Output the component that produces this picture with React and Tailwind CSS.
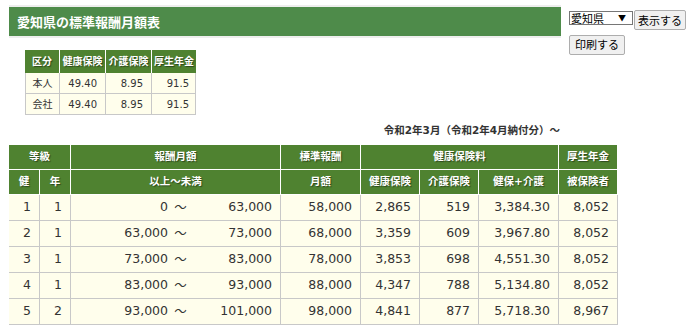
import React from "react";

const rows = [
  ["1", "1", "0", "63,000", "58,000", "2,865", "519", "3,384.30", "8,052"],
  ["2", "1", "63,000", "73,000", "68,000", "3,359", "609", "3,967.80", "8,052"],
  ["3", "1", "73,000", "83,000", "78,000", "3,853", "698", "4,551.30", "8,052"],
  ["4", "1", "83,000", "93,000", "88,000", "4,347", "788", "5,134.80", "8,052"],
  ["5", "2", "93,000", "101,000", "98,000", "4,841", "877", "5,718.30", "8,967"],
];

const th =
  "bg-[#4f8230] text-white font-bold text-[10.5px] text-center border-r border-b border-white p-0 [text-shadow:1px_1px_1px_rgba(0,0,0,0.45)]";
const tdBase =
  "bg-[#fffeec] text-[#333] text-[12.5px] border-r border-b border-[#c8c8c8] py-0 pl-0";
const td = tdBase + " text-right pr-[8px]";
const sth =
  "bg-[#4f8230] text-white font-bold text-[10px] text-center border-r border-white p-0 [text-shadow:1px_1px_1px_rgba(0,0,0,0.45)]";
const std =
  "bg-[#fffeec] text-[#333] text-[10px] border-r border-b border-[#c8c8c8] py-0 pl-0";

export default function App() {
  return (
    <div className="flex items-start font-['DejaVu_Sans','Noto_Sans_CJK_JP',sans-serif] bg-white min-h-[325px]">
      <div className="ml-[9px] w-[552px] flex-none">
        <div className="mt-[5px] border-t-2 border-b-2 border-[#eeeeee]">
          <div className="h-[29px] bg-[#4e8b4a] flex items-center pl-[8px]">
            <h1 className="text-white font-bold text-[13px] leading-none font-['Noto_Sans_CJK_JP',sans-serif]">
              愛知県の標準報酬月額表
            </h1>
          </div>
        </div>

        <table className="mt-[12px] ml-[16px] border-separate border-spacing-0 table-fixed w-[171px]">
          <colgroup>
            <col className="w-[35px]" />
            <col className="w-[46px]" />
            <col className="w-[46px]" />
            <col className="w-[44px]" />
          </colgroup>
          <thead>
            <tr className="h-[23px]">
              <th className={sth}>区分</th>
              <th className={sth}>健康保険</th>
              <th className={sth}>介護保険</th>
              <th className={sth + " border-r-0"}>厚生年金</th>
            </tr>
          </thead>
          <tbody>
            {[
              ["本人", "49.40", "8.95", "91.5"],
              ["会社", "49.40", "8.95", "91.5"],
            ].map((r) => (
              <tr key={r[0]} className="h-[21px]">
                <td className={std + " border-l text-center pr-0"}>{r[0]}</td>
                <td className={std + " text-right pr-[8px]"}>{r[1]}</td>
                <td className={std + " text-right pr-[8px]"}>{r[2]}</td>
                <td className={std + " text-right pr-[6px]"}>{r[3]}</td>
              </tr>
            ))}
          </tbody>
        </table>

        <p className="mt-[8px] text-right text-[10.5px] leading-[14px] font-bold text-[#333] pr-[1px]">
          令和2年3月（令和2年4月納付分）～
        </p>

        <table className="mt-[8px] border-separate border-spacing-0 table-fixed w-[609px]">
          <colgroup>
            <col className="w-[31px]" />
            <col className="w-[31px]" />
            <col className="w-[210px]" />
            <col className="w-[80px]" />
            <col className="w-[59px]" />
            <col className="w-[59px]" />
            <col className="w-[80px]" />
            <col className="w-[59px]" />
          </colgroup>
          <thead>
            <tr className="h-[25px]">
              <th colSpan={2} className={th}>等級</th>
              <th className={th}>報酬月額</th>
              <th className={th}>標準報酬</th>
              <th colSpan={3} className={th}>健康保険料</th>
              <th className={th}>厚生年金</th>
            </tr>
            <tr className="h-[25px]">
              <th className={th}>健</th>
              <th className={th}>年</th>
              <th className={th}>以上～未満</th>
              <th className={th}>月額</th>
              <th className={th}>健康保険</th>
              <th className={th}>介護保険</th>
              <th className={th}>健保+介護</th>
              <th className={th}>被保険者</th>
            </tr>
          </thead>
          <tbody>
            {rows.map((r) => (
              <tr key={r[0]} className="h-[26px]">
                <td className={td}>{r[0]}</td>
                <td className={td}>{r[1]}</td>
                <td className={tdBase + " pr-0"}>
                  <div className="flex pr-[8px]">
                    <span className="w-[97px] text-right">{r[2]}</span>
                    <span className="w-[25px] text-center font-['Noto_Sans_CJK_JP',sans-serif]">～</span>
                    <span className="flex-1 text-right">{r[3]}</span>
                  </div>
                </td>
                <td className={td}>{r[4]}</td>
                <td className={td}>{r[5]}</td>
                <td className={td}>{r[6]}</td>
                <td className={td}>{r[7]}</td>
                <td className={td}>{r[8]}</td>
              </tr>
            ))}
          </tbody>
        </table>
      </div>

      <div className="ml-[8px] mt-[10px] w-[127px] flex-none font-['Noto_Sans_CJK_JP',sans-serif] text-black">
        <div className="flex items-start gap-[1px]">
          <div className="relative mt-[1px] flex-none">
            <select
              defaultValue="愛知県"
              className="appearance-none block w-[64px] h-[14px] border border-[#767676] bg-white text-[11px] leading-[12px] pl-[1px] py-0 rounded-none"
            >
              <option>愛知県</option>
            </select>
            <span className="pointer-events-none absolute right-[7px] top-[1px] text-[8px] leading-[12px]">▼</span>
          </div>
          <button className="flex-none whitespace-nowrap h-[20px] px-[3px] border border-[#adadad] bg-[#f0f0f0] rounded-[2px] text-[11px] leading-none">
            表示する
          </button>
        </div>
        <button className="mt-[2px] whitespace-nowrap h-[20px] px-[5px] border border-[#adadad] bg-[#f0f0f0] rounded-[2px] text-[11px] leading-none">
          印刷する
        </button>
      </div>
    </div>
  );
}
